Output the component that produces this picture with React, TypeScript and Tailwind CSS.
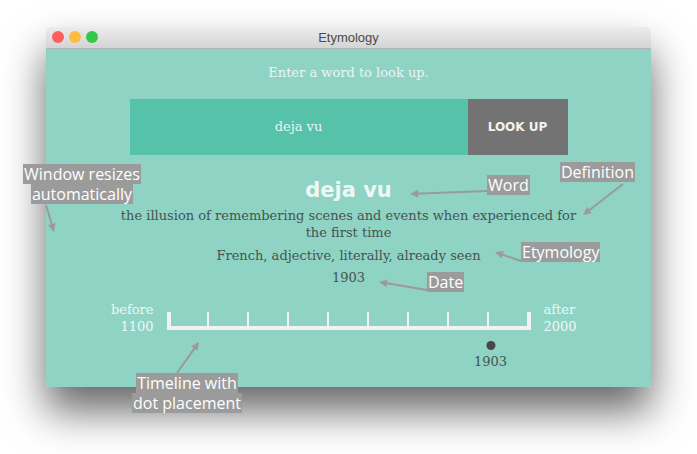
import React from 'react'

const serif = "font-['DejaVu_Serif',serif]"
const note = "font-['Open_Sans',sans-serif]"

function Arrow({ x1, y1, x2, y2 }: { x1: number; y1: number; x2: number; y2: number }) {
  const a = Math.atan2(y2 - y1, x2 - x1)
  const l = 9
  const w = 0.45
  const p1 = `${x2 - l * Math.cos(a - w)},${y2 - l * Math.sin(a - w)}`
  const p2 = `${x2 - l * Math.cos(a + w)},${y2 - l * Math.sin(a + w)}`
  return (
    <g>
      <line x1={x1} y1={y1} x2={x2 - 5 * Math.cos(a)} y2={y2 - 5 * Math.sin(a)} stroke="#9a9a9a" strokeWidth={2} />
      <polygon points={`${x2},${y2} ${p1} ${p2}`} fill="#9a9a9a" />
    </g>
  )
}

function Label({ lines, className }: { lines: string[]; className: string }) {
  return (
    <div className={`absolute flex flex-col items-center text-[16px] leading-[20px] text-white ${note} ${className}`}>
      {lines.map((l) => (
        <span key={l} className="bg-[#9b9b9b] px-[1px]">{l}</span>
      ))}
    </div>
  )
}

export default function App() {
  const ticks = Array.from({ length: 10 }, (_, i) => i)
  return (
    <div className="relative w-[697px] h-[454px] bg-white overflow-hidden pt-[27px] pl-[46px]">
      <div className="w-[605px] h-[360px] rounded-t-[5px] rounded-b-[3px] overflow-hidden flex flex-col shadow-[0_24px_42px_rgba(0,0,0,0.6)]">
        <div className="relative h-[22px] shrink-0 bg-gradient-to-b from-[#ececec] to-[#d4d4d4] border-b border-[#b3b3b3] flex items-center justify-center">
          <div className="absolute left-[6px] top-[4px] flex gap-[5px]">
            <span className="w-[12px] h-[12px] rounded-full bg-[#fc605c]" />
            <span className="w-[12px] h-[12px] rounded-full bg-[#fdbc40]" />
            <span className="w-[12px] h-[12px] rounded-full bg-[#34c84a]" />
          </div>
          <span className="text-[13px] text-[#4a4a4a] font-['Liberation_Sans',sans-serif]">Etymology</span>
        </div>
        <div className="flex-1 bg-[#8fd3c4] flex flex-col items-center">
          <p className={`mt-[15px] text-[13px] leading-[18px] text-[#eaf6f2] ${serif}`}>Enter a word to look up.</p>
          <div className="mt-[17px] flex h-[56px]">
            <div className={`w-[338px] bg-[#56c2aa] flex items-center justify-center text-[13px] text-[#e6f5f0] ${serif}`}>deja vu</div>
            <div className="w-[100px] bg-[#737373] flex items-center justify-center text-[12px] font-bold text-[#f2f2f2] font-['DejaVu_Sans',sans-serif]">LOOK UP</div>
          </div>
          <h1 className="mt-[22px] text-[21px] leading-[26px] font-bold text-[#eef7f4] font-['DejaVu_Sans',sans-serif]">deja vu</h1>
          <p className={`mt-[4px] w-[462px] text-center text-[13px] leading-[17px] text-[#46534f] ${serif}`}>
            the illusion of remembering scenes and events when experienced for the first time
          </p>
          <p className={`mt-[6px] text-[13px] leading-[17px] text-[#46534f] ${serif}`}>French, adjective, literally, already seen</p>
          <p className={`mt-[5px] text-[13px] leading-[17px] text-[#46534f] ${serif}`}>1903</p>
          <div className="mt-[15px] flex items-end gap-[13px]">
            <div className={`w-[50px] text-right text-[13px] leading-[17px] text-[#eef7f4] ${serif}`}>
              <div>before</div>
              <div>1100</div>
            </div>
            <div className="relative w-[364px] h-[18px] mb-[5px]">
              <div className="absolute left-0 right-0 bottom-0 h-[4px] bg-[#f2f2f2]" />
              {ticks.map((i) => (
                <div
                  key={i}
                  className={`absolute bottom-0 h-[18px] bg-[#f2f2f2] ${i === 0 || i === 9 ? 'w-[4px]' : 'w-[2px]'}`}
                  style={{ left: i === 9 ? 360 : i === 0 ? 0 : i * 40 }}
                />
              ))}
              <div className="absolute left-[324px] top-[29px] -translate-x-1/2 flex flex-col items-center">
                <span className="w-[9px] h-[9px] rounded-full bg-[#474747]" />
                <span className={`mt-[3px] text-[13px] leading-[17px] text-[#46534f] ${serif}`}>1903</span>
              </div>
            </div>
            <div className={`w-[50px] text-left text-[13px] leading-[17px] text-[#eef7f4] ${serif}`}>
              <div>after</div>
              <div>2000</div>
            </div>
          </div>
        </div>
      </div>

      <svg className="absolute left-0 top-0 pointer-events-none" width={697} height={454}>
        <Arrow x1={46} y1={205} x2={54} y2={232} />
        <Arrow x1={487} y1={191} x2={410} y2={194} />
        <Arrow x1={623} y1={184} x2={583} y2={215} />
        <Arrow x1={521} y1={261} x2={495} y2={252} />
        <Arrow x1={427} y1={290} x2={379} y2={282} />
        <Arrow x1={177} y1={373} x2={199} y2={342} />
      </svg>

      <Label lines={['Window resizes', 'automatically']} className="left-[23px] top-[164px]" />
      <Label lines={['Word']} className="left-[487px] top-[175px]" />
      <Label lines={['Definition']} className="left-[560px] top-[162px]" />
      <Label lines={['Etymology']} className="left-[521px] top-[242px]" />
      <Label lines={['Date']} className="left-[427px] top-[272px]" />
      <Label lines={['Timeline with', 'dot placement']} className="left-[132px] top-[373px]" />
    </div>
  )
}
